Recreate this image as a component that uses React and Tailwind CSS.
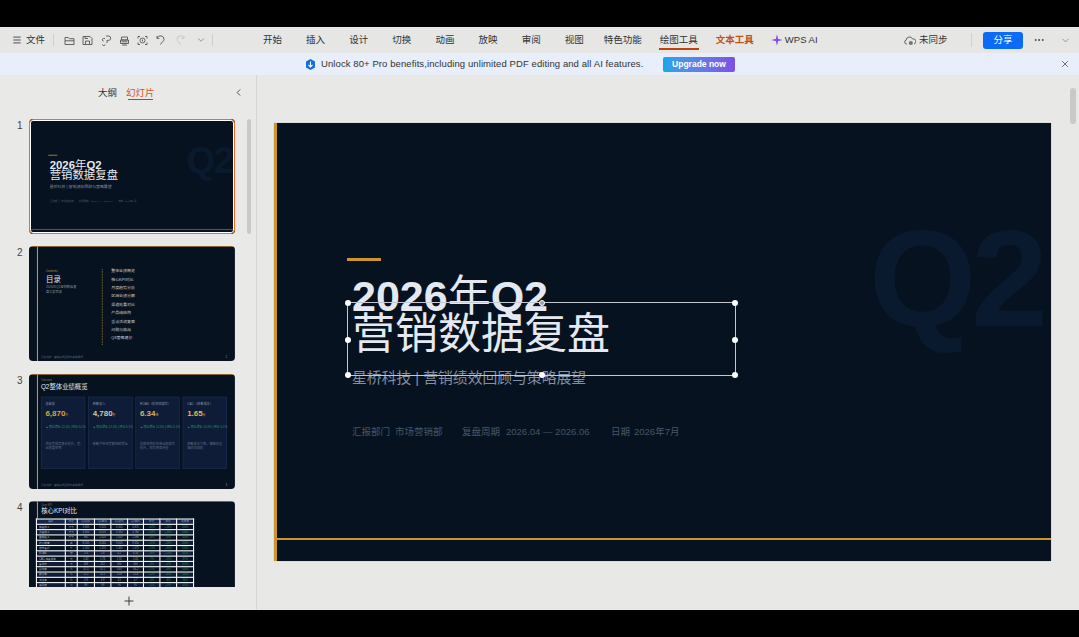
import { Menu, ChevronDown, ChevronLeft, Ellipsis, X, Plus } from 'lucide-react'

const tabs = ['开始', '插入', '设计', '切换', '动画', '放映', '审阅', '视图']

const tocItems = ['整体业绩概览', '核心KPI对比', '月度趋势分析', '区域业绩分解', '渠道效果对比', '产品线结构', '重点活动复盘', '问题与挑战', 'Q3策略建议']

const kpis = [
  { label: '总营收', value: '6,870', unit: '万', color: 'text-[#d9a63a]', note: '目标完成率稳步提升，超出季度预期' },
  { label: '新客收入', value: '4,780', unit: '万', color: 'text-[#d8c9a0]', note: '新客户转化贡献持续增长' },
  { label: 'ROAS（投资回报率）', value: '6.34', unit: '倍', color: 'text-[#d9b65a]', note: '投放结构优化带动回报率提升，效率明显改善' },
  { label: 'CAC（获客成本）', value: '1.65', unit: '元', color: 'text-[#e2b84a]', note: '获客成本下降，精细化运营初见成效' },
]

const colWidths = ['w-[109px]', 'w-[45px]', 'w-[65px]', 'w-[62px]', 'w-[63px]', 'w-[60px]', 'w-[62px]', 'w-[63px]', 'w-[64px]']
const tableHead = ['指标', '单位', 'Q1目标', 'Q1实际', 'Q2目标', 'Q2实际', '环比', '同比', '达成率']
const tableRows = [
  ['销售收入', '万元', '5,800', '5,920', '6,500', '6,870', '+16%', '+23%', '106%'],
  ['新客收入', '万元', '3,900', '4,010', '4,500', '4,780', '+19%', '+28%', '106%'],
  ['营销投入', '万元', '980', '1,020', '1,050', '1,084', '+6%', '+9%', '103%'],
  ['线索数量', '条', '8,200', '8,460', '9,000', '9,350', '+11%', '+18%', '104%'],
  ['成交客户', '个', '1,260', '1,310', '1,400', '1,475', '+13%', '+20%', '105%'],
  ['ROAS', '倍', '5.9', '5.8', '6.2', '6.34', '+9%', '+13%', '102%'],
  ['CAC 获客成本', '元', '1.82', '1.78', '1.70', '1.65', '-7%', '-11%', '97%'],
  ['客单价', '元', '468', '452', '460', '466', '+3%', '+2%', '101%'],
  ['复购率', '%', '31.5', '32.1', '33.0', '34.2', '+7%', '+9%', '104%'],
  ['转化率', '%', '15.2', '15.5', '15.8', '15.8', '+2%', '+4%', '100%'],
  ['流失率', '%', '4.8', '4.9', '4.5', '4.7', '-4%', '-6%', '96%'],
  ['满意度', '分', '88', '89', '90', '91', '+2%', '+3%', '101%'],
]

// quick-access icons, drawn to follow the WPS toolbar glyphs
const quickIcons = [
  { w: 'ml-0', color: '#555', d: 'M1 2.5h3.2l1 1.2H10v5.8H1zM1 5.8h9' },
  { w: 'ml-[7px]', color: '#555', d: 'M1 1.5h7l2 2v6H1zM3.5 9.5V6h4v3.5M3 1.5v2h3' },
  { w: 'ml-[8px]', color: '#555', d: 'M5 1h2.5a2 2 0 0 1 0 4.4H6V8M4 3.5H2.6a1.3 1.3 0 0 0 0 2.6M4 9.5a1.2 1.2 0 1 1-2.4 0' },
  { w: 'ml-[7px]', color: '#555', d: 'M2.5 2h6v3h-6zM1.5 5h8v3.5h-8zM2.5 6.8h6M3 10h5' },
  { w: 'ml-[7px]', color: '#555', d: 'M3 1.5H1v2M8 1.5h2v2M3 9.5H1v-2M8 9.5h2v-2M5.5 3a2.5 2.5 0 1 1 0 5 2.5 2.5 0 0 1 0-5zM5.5 4.5v2' },
  { w: 'ml-[7px]', color: '#555', d: 'M2 3.2A3.6 3.6 0 0 1 9 4.4C9 6.4 6.5 7 5.5 9.5M2 1v2.4h2.4' },
  { w: 'ml-[9px]', color: '#c4c4c4', d: 'M9 3.2A3.6 3.6 0 0 0 2 4.4C2 6.4 4.5 7 5.5 9.5M9 1v2.4H6.6' },
]

function QuickIcon({ d, color, className }) {
  return (
    <svg viewBox="0 0 11 11" fill="none" stroke={color} strokeWidth="0.9" className={`w-[11px] h-[11px] shrink-0 ${className}`}>
      <path d={d} />
    </svg>
  )
}

function CloudDot() {
  return (
    <svg viewBox="0 0 12 11" fill="none" className="w-[12px] h-[11px] shrink-0">
      <path d="M3 9H2.4a2 2 0 0 1-.3-3.9A3.4 3.4 0 0 1 8.6 4 2.5 2.5 0 0 1 10 9" stroke="#555" strokeWidth="0.9" />
      <circle cx="6.8" cy="8" r="2.1" fill="#777" />
    </svg>
  )
}

function AiStar() {
  return (
    <svg viewBox="0 0 12 12" className="w-[12px] h-[12px] shrink-0">
      <path d="M6 0.2 7 5 11.8 6 7 7 6 11.8 5 7 0.2 6 5 5z" fill="#5a3fe0" />
      <path d="M6 3.5 6.6 5.4 8.5 6 6.6 6.6 6 8.5 5.4 6.6 3.5 6 5.4 5.4z" fill="#c64bd8" />
    </svg>
  )
}

function BannerBadge() {
  return (
    <svg viewBox="0 0 12 12" className="w-[11px] h-[11px] shrink-0">
      <path d="M6 0 10.9 2.8 10.9 9.2 6 12 1.1 9.2 1.1 2.8z" fill="#1470d8" />
      <path d="M6 2.8V8.6M3.8 6.5 6 8.8 8.2 6.5" stroke="#fff" strokeWidth="1.2" fill="none" />
    </svg>
  )
}

function TitleSlide() {
  return (
    <div className="relative w-[777px] h-[438px] bg-[#06121f] overflow-hidden pl-[78px] pt-[135px]">
      <div className="absolute left-0 top-0 bottom-0 w-[3px] bg-[#c9962b]" />
      <div className="absolute left-0 right-0 top-[415px] h-[2px] bg-[#c9962b]" />
      <div className="absolute left-[595px] top-[82px] text-[138px] leading-[146px] tracking-[-5px] font-bold text-[#0a1a2e]">Q2</div>
      <div className="relative -ml-[5px] w-[34px] h-[3px] bg-[#c9962b]" />
      <div className="relative mt-[16px] text-[#e4e9f1] text-[43px] leading-[38px]">
        <div className="font-bold whitespace-nowrap">2026<span className="font-normal">年</span>Q2</div>
        <div className="whitespace-nowrap">营销数据复盘</div>
      </div>
      <div className="relative mt-[15px] text-[#84909f] text-[14.8px] leading-[20px] whitespace-nowrap">星桥科技 | 营销绩效回顾与策略展望</div>
      <div className="relative mt-[36px] flex text-[#465669] text-[9.5px] leading-[16px] whitespace-nowrap">
        <span className="w-[43px]">汇报部门</span>
        <span className="w-[67px]">市场营销部</span>
        <span className="w-[44px]">复盘周期</span>
        <span className="w-[105px]">2026.04 — 2026.06</span>
        <span className="w-[23px]">日期</span>
        <span>2026年7月</span>
      </div>
    </div>
  )
}

function TocSlide() {
  return (
    <div className="relative w-[777px] h-[438px] bg-[#06121f] overflow-hidden flex pl-[64px] pt-[88px]">
      <div className="absolute left-[30px] top-0 bottom-0 w-[4px] bg-[#c9962b]" />
      <div className="absolute left-0 right-0 top-0 h-[3px] bg-[#a87c26]" />
      <div className="w-[211px]">
        <div className="text-[#b8963f] text-[11px] leading-[16px]">Contents</div>
        <div className="text-[#e4e9f1] text-[28px] leading-[44px]">目录</div>
        <div className="text-[#7f8b9b] text-[12px] leading-[16px] w-[125px]">2026年Q2营销数据复盘汇报目录</div>
      </div>
      <div className="border-l-[3px] border-dotted border-[#c9962b] h-[285px] pl-[32px]">
        <div className="-mt-[10px]">
          {tocItems.map((item) => (
            <div key={item} className="text-[#c7ced8] text-[15px] leading-[31.6px] whitespace-nowrap">{item}</div>
          ))}
        </div>
      </div>
      <div className="absolute left-[45px] bottom-[10px] text-[#55647a] text-[10px]">星桥科技 · 营销绩效回顾与策略展望</div>
      <div className="absolute right-[30px] bottom-[10px] text-[#b8963f] text-[10px]">2</div>
    </div>
  )
}

function KpiSlide() {
  return (
    <div className="relative w-[777px] h-[438px] bg-[#06121f] overflow-hidden pl-[45px] pr-[30px] pt-[18px]">
      <div className="absolute left-[30px] top-0 bottom-0 w-[4px] bg-[#c9962b]" />
      <div className="absolute left-0 right-0 top-0 h-[3px] bg-[#a87c26]" />
      <div className="text-[#8d7a45] text-[10px] leading-[14px]">Overview</div>
      <div className="text-[#e4e9f1] text-[24px] leading-[34px]">Q2整体业绩概览</div>
      <div className="grid grid-cols-4 gap-[11px] mt-[20px]">
        {kpis.map((kpi) => (
          <div key={kpi.label} className="h-[272px] bg-[#0e1c38] border-[2px] border-[#1e3458] px-[15px] pt-[17px]">
            <div className="text-[#8592a6] text-[12px] leading-[18px] whitespace-nowrap">{kpi.label}</div>
            <div className={`mt-[6px] text-[30px] leading-[38px] font-bold ${kpi.color}`}>
              {kpi.value}<span className="text-[11px] font-normal">{kpi.unit}</span>
            </div>
            <div className="mt-[18px] text-[#1fa35c] text-[11px] leading-[16px] whitespace-nowrap">▲ 同比增长 12.4% | 环比 5.1%</div>
            <div className="mt-[48px] text-[#5f6d82] text-[12px] leading-[16px]">{kpi.note}</div>
          </div>
        ))}
      </div>
      <div className="absolute left-[45px] bottom-[10px] text-[#55647a] text-[10px]">星桥科技 · 营销绩效回顾与策略展望</div>
      <div className="absolute right-[30px] bottom-[10px] text-[#b8963f] text-[10px]">3</div>
    </div>
  )
}

function TableSlide() {
  return (
    <div className="relative w-[777px] h-[438px] bg-[#06121f] overflow-hidden pl-[26px] pt-[8px]">
      <div className="absolute left-[30px] top-0 bottom-0 w-[4px] bg-[#c9962b]" />
      <div className="absolute left-0 right-0 top-0 h-[3px] bg-[#a87c26]" />
      <div className="pl-[20px] text-[#8d7a45] text-[10px] leading-[14px]">Core KPI</div>
      <div className="pl-[20px] text-[#e4e9f1] text-[24px] leading-[34px] mb-[10px]">核心KPI对比</div>
      <table className="relative table-fixed border-collapse w-[593px] bg-[#06121f]">
        <tbody>
          <tr className="h-[20px] bg-[#14264a]">
            {tableHead.map((head, i) => (
              <td key={head} className={`${colWidths[i]} border-[4px] border-white text-center text-[#9aa6b8] text-[10px] leading-[14px] p-0`}>{head}</td>
            ))}
          </tr>
          {tableRows.map((row, r) => (
            <tr key={row[0]} className={`h-[20px] ${r % 2 ? 'bg-[#101d38]' : 'bg-[#06121f]'}`}>
              {row.map((cell, i) => (
                <td key={i} className={`border-[4px] border-white text-[10px] leading-[14px] p-0 whitespace-nowrap overflow-hidden ${i === 0 ? 'text-left pl-[8px] text-[#aeb8c6]' : i > 5 ? 'text-center text-[#2c8f5b]' : 'text-center text-[#8f9bad]'}`}>{cell}</td>
              ))}
            </tr>
          ))}
        </tbody>
      </table>
    </div>
  )
}

function Thumb({ num, active, children }) {
  return (
    <div className="flex shrink-0 h-[115px]">
      <div className="w-[29px] pl-[17px] text-[10px] leading-[13px] text-[#444]">{num}</div>
      <div className="relative w-[206px] h-[115px] overflow-hidden rounded-[4px]">
        <div className="origin-top-left scale-[0.265] w-[777px] h-[438px]">{children}</div>
        {active && <div className="absolute inset-0 rounded-[4px] border-[1.5px] border-[#e8702a] shadow-[inset_0_0_0_1px_#fff]" />}
      </div>
    </div>
  )
}

function App() {
  return (
    <div className="w-[1079px] h-[637px] bg-black pt-[27px] overflow-hidden font-['Liberation_Sans','Noto_Sans_CJK_SC',sans-serif]">
      <div className="h-[583px] flex flex-col bg-[#e8e8e7]">
        {/* top toolbar */}
        <div className="h-[26px] shrink-0 bg-[#e6e6e5] flex items-center text-[9.5px] text-[#333]">
          <Menu size={10} className="ml-[12px]" />
          <span className="ml-[4px] w-[27px]">文件</span>
          <div className="w-px h-[12px] bg-[#cfcfcf]" />
          <div className="flex items-center ml-[10px]">
            {quickIcons.map((icon) => (
              <QuickIcon key={icon.d} d={icon.d} color={icon.color} className={icon.w} />
            ))}
            <ChevronDown size={10} strokeWidth={1.3} className="ml-[10px] text-[#555]" />
          </div>
          <div className="w-px h-[12px] bg-[#cfcfcf] ml-[6px]" />
          <div className="flex items-center ml-[49px] whitespace-nowrap">
            <div className="flex items-center gap-[24.1px] ml-[1px]">
              {tabs.map((t) => <span key={t}>{t}</span>)}
            </div>
            <span className="ml-[20px]">特色功能</span>
            <span className="relative ml-[18px]">
              绘图工具
              <span className="absolute -left-[1px] -right-[1px] top-[15px] h-[2px] bg-[#c2410c]" />
            </span>
            <span className="text-[#c2500f] font-bold ml-[18px]">文本工具</span>
            <span className="flex items-center gap-[2px] text-[#333] text-[9.5px] ml-[17px]">
              <AiStar />
              WPS AI
            </span>
          </div>
          <div className="flex-1" />
          <CloudDot />
          <span className="ml-[3px] w-[52px]">未同步</span>
          <div className="w-px h-[14px] bg-[#cfcfcf]" />
          <div className="ml-[11px] w-[40px] h-[17px] rounded-[3px] bg-[#0b6bf5] text-white flex items-center justify-center">分享</div>
          <Ellipsis size={12} className="ml-[10px] text-[#444]" />
          <ChevronDown size={11} strokeWidth={1.2} className="ml-[15px] mr-[8px] text-[#555]" />
        </div>
        {/* upgrade banner */}
        <div className="h-[22px] shrink-0 bg-[#e8eefa] flex items-center text-[9.5px] text-[#333] pl-[305px] pr-[9px]">
          <BannerBadge />
          <span className="ml-[5px] w-[342px] whitespace-nowrap tracking-[0.09px]">Unlock 80+ Pro benefits,including unlimited PDF editing and all AI features.</span>
          <span className="w-[72px] h-[15px] rounded-[2px] bg-gradient-to-r from-[#0ea5e9] to-[#7c4fe0] text-white font-bold text-[8.5px] text-center leading-[15px]">Upgrade now</span>
          <div className="flex-1" />
          <X size={10} className="text-[#555]" />
        </div>
        <div className="flex-1 flex min-h-0">
          {/* slide panel */}
          <div className="w-[257px] shrink-0 border-r border-[#d6d6d6] bg-[#e9e9e8] flex flex-col">
            <div className="h-[44px] shrink-0 flex items-start pt-[11px] text-[9.5px] text-[#333] relative pl-[98px]">
              <span>大纲</span>
              <span className="relative ml-[9px] text-[#d2571b]">
                幻灯片
                <span className="absolute left-[2px] right-[2px] top-[13px] h-px bg-[#c2410c]" />
              </span>
              <ChevronLeft size={11} className="absolute left-[233px] top-[12px] text-[#444]" />
            </div>
            <div className="flex-1 min-h-0 flex">
              <div className="w-[235px] h-[468px] flex flex-col gap-[12.4px] overflow-hidden">
                <Thumb num="1" active><TitleSlide /></Thumb>
                <Thumb num="2"><TocSlide /></Thumb>
                <Thumb num="3"><KpiSlide /></Thumb>
                <Thumb num="4"><TableSlide /></Thumb>
              </div>
              <div className="ml-[12px] w-[4px] h-[115px] rounded-full bg-[#c9c9c9]" />
            </div>
            <div className="h-[23px] shrink-0 flex justify-center pl-[1px] pt-[7px]">
              <Plus size={14} strokeWidth={1.6} className="text-[#333]" />
            </div>
          </div>
          {/* canvas */}
          <div className="flex-1 relative pl-[17px] pt-[48px]">
            <div className="relative w-[777px] h-[438px] shadow-[0_0_1px_#999]">
              <TitleSlide />
              <div className="absolute left-[73px] top-[179px] w-[389px] h-[74px] border border-[#c5cad2]">
                <span className="absolute -left-[3px] -top-[3px] w-[6px] h-[6px] rounded-full bg-white" />
                <span className="absolute left-[191px] -top-[3px] w-[6px] h-[6px] rounded-full bg-[#9aa0a8] border border-white" />
                <span className="absolute -right-[3px] -top-[3px] w-[6px] h-[6px] rounded-full bg-white" />
                <span className="absolute -left-[3px] top-[34px] w-[6px] h-[6px] rounded-full bg-white" />
                <span className="absolute -right-[3px] top-[34px] w-[6px] h-[6px] rounded-full bg-white" />
                <span className="absolute -left-[3px] -bottom-[3px] w-[6px] h-[6px] rounded-full bg-white" />
                <span className="absolute left-[191px] -bottom-[3px] w-[6px] h-[6px] rounded-full bg-white" />
                <span className="absolute -right-[3px] -bottom-[3px] w-[6px] h-[6px] rounded-full bg-white" />
              </div>
            </div>
            <div className="absolute right-[3px] top-[13px] w-[6px] h-[36px] rounded-full bg-[#c9c9c9]" />
          </div>
        </div>
      </div>
    </div>
  )
}

export default App
